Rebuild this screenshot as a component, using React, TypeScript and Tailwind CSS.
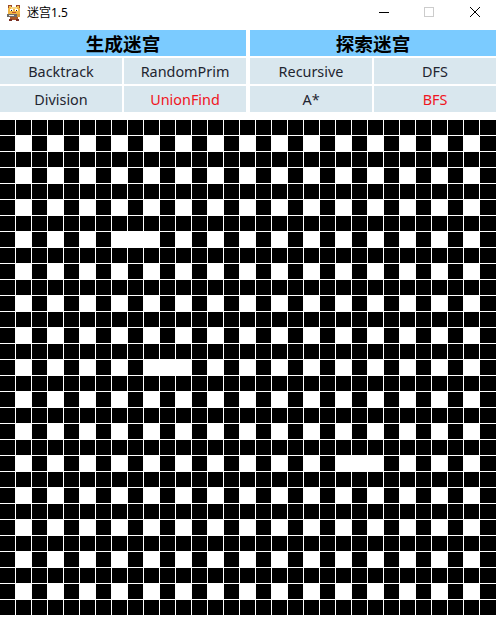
import React from "react";

const openCells = ["7-8", "15-10", "21-22"];

const isWhite = (row: number, col: number) => {
  if (row % 2 === 1 && col % 2 === 1) return true;
  return openCells.includes(`${row}-${col}`);
};

const AppIcon = () => (
  <svg width="14" height="16" viewBox="0 0 14 16" className="shrink-0">
    <rect x="1" y="0" width="4" height="3" fill="#9a4a2a" />
    <rect x="9" y="0" width="4" height="3" fill="#9a4a2a" />
    <rect x="2" y="1" width="2" height="2" fill="#f6c64e" />
    <rect x="10" y="1" width="2" height="2" fill="#f6c64e" />
    <rect x="1" y="3" width="12" height="6" fill="#f2b544" />
    <rect x="4" y="2" width="6" height="2" fill="#f7d98a" />
    <rect x="3" y="4" width="3" height="2" fill="#fff" />
    <rect x="8" y="4" width="3" height="2" fill="#fff" />
    <rect x="4" y="5" width="1" height="1" fill="#201410" />
    <rect x="9" y="5" width="1" height="1" fill="#201410" />
    <rect x="5" y="7" width="4" height="1" fill="#c0502c" />
    <rect x="0" y="9" width="10" height="3" fill="#6f6a66" />
    <rect x="2" y="10" width="5" height="1" fill="#eeeae4" />
    <rect x="10" y="9" width="3" height="3" fill="#d99a3c" />
    <rect x="3" y="12" width="8" height="3" fill="#a8562a" />
    <rect x="2" y="14" width="3" height="2" fill="#7a2f24" />
    <rect x="9" y="14" width="3" height="2" fill="#7a2f24" />
  </svg>
);

const TitleBar = () => (
  <div className="flex h-[30px] items-center bg-white">
    <div className="mb-[4px] flex items-center gap-[6px] pl-[7px]">
      <AppIcon />
      <span className="text-xs text-black">迷宫1.5</span>
    </div>
    <div className="ml-auto flex items-center">
      <svg width="46" height="24" viewBox="0 0 46 24">
        <path d="M21 9.5H31" stroke="#000" />
      </svg>
      <svg width="46" height="24" viewBox="0 0 46 24">
        <rect x="20.5" y="4.5" width="9" height="9" fill="none" stroke="#ccc" />
      </svg>
      <svg width="46" height="24" viewBox="0 0 46 24">
        <path d="M20 4L30 14M30 4L20 14" stroke="#000" />
      </svg>
    </div>
  </div>
);

const Panel = ({ title, items }: { title: string; items: { label: string; active?: boolean }[] }) => (
  <div className="flex flex-col gap-[2px]">
    <div className="flex h-[26px] items-center justify-center bg-[#7bcbff] pt-px text-[18.67px] font-bold text-black">
      {title}
    </div>
    <div className="grid grid-cols-2 gap-[2px]">
      {items.map((item) => (
        <button
          key={item.label}
          className={`flex h-[26px] items-center justify-center bg-[#d9e7ee] pt-px text-[14.4px] ${
            item.active ? "text-[#f01522]" : "text-[#1f2530]"
          }`}
        >
          {item.label}
        </button>
      ))}
    </div>
  </div>
);

export default function App() {
  const rows = Array.from({ length: 31 }, (_, i) => i);
  const cols = Array.from({ length: 31 }, (_, i) => i);

  return (
    <div className="h-[617px] w-[496px] overflow-hidden bg-white font-['Noto_Sans','Noto_Sans_CJK_SC',sans-serif]">
      <TitleBar />
      <div className="grid grid-cols-2 gap-[4px]">
        <Panel
          title="生成迷宫"
          items={[
            { label: "Backtrack" },
            { label: "RandomPrim" },
            { label: "Division" },
            { label: "UnionFind", active: true },
          ]}
        />
        <Panel
          title="探索迷宫"
          items={[
            { label: "Recursive" },
            { label: "DFS" },
            { label: "A*" },
            { label: "BFS", active: true },
          ]}
        />
      </div>
      <div className="mt-[8px] grid grid-cols-[repeat(30,15px)_16px] gap-px">
        {rows.map((row) =>
          cols.map((col) => (
            <div key={`${row}-${col}`} className={`h-[15px] ${isWhite(row, col) ? "bg-white" : "bg-black"}`} />
          )),
        )}
      </div>
    </div>
  );
}
